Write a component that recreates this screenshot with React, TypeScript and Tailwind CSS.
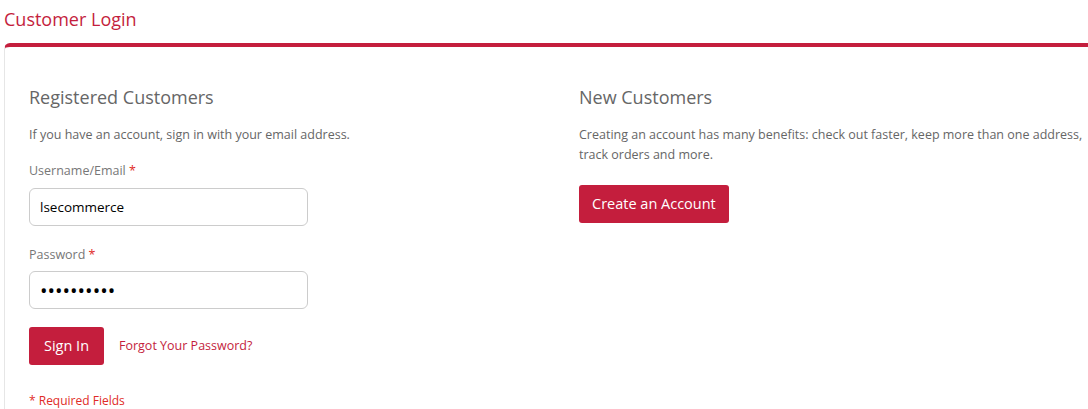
import React from 'react';

export default function App() {
  return (
    <div className="w-[1088px] h-[409px] overflow-hidden bg-white font-['Open_Sans',sans-serif]">
      <h1 className="pl-1 pt-[6px] text-[18px] leading-[26px] text-[#c41e3d] font-normal">Customer Login</h1>

      <div className="mt-[11px] ml-1 w-[1100px] border-t-4 border-t-[#c41e3d] border-l border-l-[#e6e6e6] rounded-tl-md pt-[38px] pl-6">
        <div className="grid grid-cols-[550px_1fr]">
          <div>
            <h2 className="text-[18px] leading-6 text-[#666]">Registered Customers</h2>
            <p className="mt-4 text-[12.5px] leading-5 text-[#666]">
              If you have an account, sign in with your email address.
            </p>

            <label className="block mt-4 text-[12.5px] leading-5 text-[#777]">
              Username/Email <span className="text-[#e02b27]">*</span>
            </label>
            <input
              type="text"
              defaultValue="lsecommerce"
              className="mt-[7px] block w-[279px] h-[38px] px-[10px] text-[13.5px] text-black border border-[#ccc] rounded-md outline-none"
            />

            <label className="block mt-[19px] text-[12.5px] leading-5 text-[#777]">
              Password <span className="text-[#e02b27]">*</span>
            </label>
            <input
              type="password"
              defaultValue="lsecommerc"
              className="mt-[6px] block w-[279px] h-[38px] px-[10px] text-[20px] text-black border border-[#ccc] rounded-md outline-none"
            />

            <div className="mt-[18px] flex items-center gap-[15px]">
              <button className="h-[38px] w-[75px] bg-[#c41e3d] text-white text-[14.5px] rounded-[3px]">Sign In</button>
              <a href="#" className="text-[12.5px] text-[#c41e3d]">Forgot Your Password?</a>
            </div>

            <p className="mt-[26px] text-[12px] leading-5 text-[#e02b27]">* Required Fields</p>
          </div>

          <div>
            <h2 className="text-[18px] leading-6 text-[#666]">New Customers</h2>
            <p className="mt-4 w-[520px] text-[12.5px] leading-5 text-[#666]">
              Creating an account has many benefits: check out faster, keep more than one address, track orders and more.
            </p>
            <button className="mt-5 h-[38px] px-[13px] bg-[#c41e3d] text-white text-[14.5px] rounded-[3px]">
              Create an Account
            </button>
          </div>
        </div>
      </div>
    </div>
  );
}
